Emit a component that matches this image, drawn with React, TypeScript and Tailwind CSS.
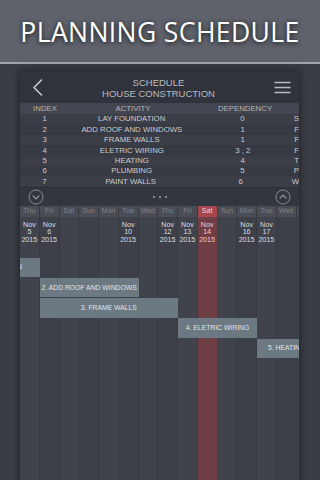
import React from "react";

const rows = [
  { idx: 1, activity: "LAY FOUNDATION", dep: "0", extra: "S" },
  { idx: 2, activity: "ADD ROOF AND WINDOWS", dep: "1", extra: "F" },
  { idx: 3, activity: "FRAME WALLS", dep: "1", extra: "F" },
  { idx: 4, activity: "ELETRIC WIRING", dep: "3 , 2", extra: "F" },
  { idx: 5, activity: "HEATING", dep: "4", extra: "T" },
  { idx: 6, activity: "PLUMBING", dep: "5", extra: "P" },
  { idx: 7, activity: "PAINT WALLS", dep: "6", extra: "W" },
];

const days = [
  { day: "Thu", date: "5" },
  { day: "Fri", date: "6" },
  { day: "Sat" },
  { day: "Sun" },
  { day: "Mon" },
  { day: "Tue", date: "10" },
  { day: "Wed" },
  { day: "Thu", date: "12" },
  { day: "Fri", date: "13" },
  { day: "Sat", date: "14", today: true },
  { day: "Sun" },
  { day: "Mon", date: "16" },
  { day: "Tue", date: "17" },
  { day: "Wed" },
  { day: "Thu" },
];

const COL = 19.75;

// bars sit on the timeline canvas; first one starts before the visible range
const bars = [
  { label: "1. LAY FOUNDATION", left: -82, width: 101.75 },
  { label: "2. ADD ROOF AND WINDOWS", left: COL * 1, width: COL * 5 },
  { label: "3. FRAME WALLS", left: COL * 1, width: COL * 7 },
  { label: "4. ELETRIC WIRING", left: COL * 8, width: COL * 4 },
  { label: "5. HEATING", left: COL * 12, width: COL * 3 },
];

function CircleChevron({ up }: { up?: boolean }) {
  return (
    <svg width="16" height="16" viewBox="0 0 16 16" fill="none">
      <circle cx="8" cy="8" r="7" stroke="#868990" strokeWidth="1" />
      <path
        d={up ? "M5 9.2 L8 6.2 L11 9.2" : "M5 6.8 L8 9.8 L11 6.8"}
        stroke="#9a9da3"
        strokeWidth="1.2"
        strokeLinecap="round"
        strokeLinejoin="round"
      />
    </svg>
  );
}

export default function App() {
  return (
    <div className="w-[320px] h-[480px] overflow-hidden bg-[#3a3d45] font-['Liberation_Sans',Arial,sans-serif]">
      {/* Banner */}
      <div className="h-[62px] bg-[#5f626b] flex items-center justify-center">
        <h1 className="text-white text-[26.5px] tracking-[0.4px] font-['Open_Sans',sans-serif] [text-shadow:0_1px_5px_rgba(0,0,0,0.85)] pt-[3px]">
          PLANNING SCHEDULE
        </h1>
      </div>
      <div className="h-[2px] bg-[#a2a4a8]" />

      {/* Phone panel */}
      <div className="ml-[20px] mt-[7px] w-[279px] h-[420px] bg-[#3e4149] overflow-hidden shadow-[0_0_8px_rgba(0,0,0,0.55)]">
        {/* Header */}
        <div className="h-[32px] bg-[#30333b] flex items-center justify-between px-[12px]">
          <svg width="11" height="17" viewBox="0 0 11 17" fill="none">
            <path d="M9.5 1 L2 8.5 L9.5 16" stroke="#c6c8cd" strokeWidth="1.6" strokeLinecap="round" strokeLinejoin="round" />
          </svg>
          <div className="flex flex-col items-center text-[#b9bbc0] text-[9.5px] leading-[11px] pt-[1px]">
            <span>SCHEDULE</span>
            <span>HOUSE CONSTRUCTION</span>
          </div>
          <svg width="17" height="13" viewBox="0 0 17 13" fill="none" className="mr-[-4px]">
            <path d="M0.5 1.5 H16.5 M0.5 6.5 H16.5 M0.5 11.5 H16.5" stroke="#b8bac0" strokeWidth="1.5" />
          </svg>
        </div>

        {/* Table */}
        <div className="text-[7.8px] text-[#c9cbd0]">
          <div className="flex h-[11px] items-center bg-[#434650] text-[#b3b5ba]">
            <div className="w-[50px] text-center">INDEX</div>
            <div className="w-[126px] text-center">ACTIVITY</div>
            <div className="w-[98px] text-center">DEPENDENCY</div>
            <div className="flex-1" />
          </div>
          {rows.map((r, i) => (
            <div
              key={r.idx}
              className={`flex h-[10.4px] items-center whitespace-nowrap ${i % 2 === 0 ? "bg-[#3b3e47]" : "bg-[#373a42]"}`}
            >
              <div className="w-[50px] text-center">{r.idx}</div>
              <div className="w-[126px] text-center">{r.activity}</div>
              <div className="w-[98px] text-center">{r.dep}</div>
              <div className="flex-1 pl-[3px]">{r.extra}</div>
            </div>
          ))}
        </div>

        {/* Toolbar */}
        <div className="h-[19px] bg-[#33363e] border-t border-[#2c2f36] flex items-center justify-between px-[8px]">
          <CircleChevron />
          <div className="flex gap-[4px]">
            <span className="w-[2px] h-[2px] rounded-full bg-[#a0a2a8]" />
            <span className="w-[2px] h-[2px] rounded-full bg-[#a0a2a8]" />
            <span className="w-[2px] h-[2px] rounded-full bg-[#a0a2a8]" />
          </div>
          <CircleChevron up />
        </div>

        {/* Gantt */}
        <div className="relative h-[300px]">
          <div className="flex h-full">
            {days.map((d, i) => (
              <div
                key={i}
                className={`w-[19.75px] shrink-0 flex flex-col border-r ${
                  d.today
                    ? "bg-[#703f45] border-[#5e353a]"
                    : i % 2 === 0
                      ? "bg-[#40434b] border-[#373a41]"
                      : "bg-[#3d4048] border-[#373a41]"
                }`}
              >
                <div
                  className={`h-[11px] flex items-center justify-center text-[7px] ${
                    d.today ? "bg-[#a6474d] text-[#f3d6d8]" : "bg-[#4a4d56] text-[#7f828a]"
                  }`}
                >
                  {d.day}
                </div>
                <div
                  className={`pt-[4px] flex flex-col items-center text-[7.2px] leading-[7.6px] ${
                    d.today ? "text-[#ecc9cc]" : "text-[#dcdde1]"
                  }`}
                >
                  {d.date && (
                    <>
                      <span>Nov</span>
                      <span>{d.date}</span>
                      <span>2015</span>
                    </>
                  )}
                </div>
              </div>
            ))}
          </div>

          {bars.map((b, i) => (
            <div
              key={b.label}
              className="absolute h-[19.4px] bg-[#6c7882] flex items-center justify-center whitespace-nowrap text-[6.8px] text-[#e1e5e8] overflow-hidden"
              style={{ left: b.left, width: b.width, top: 52 + i * 20.2 }}
            >
              {b.label}
            </div>
          ))}
        </div>
      </div>
    </div>
  );
}
